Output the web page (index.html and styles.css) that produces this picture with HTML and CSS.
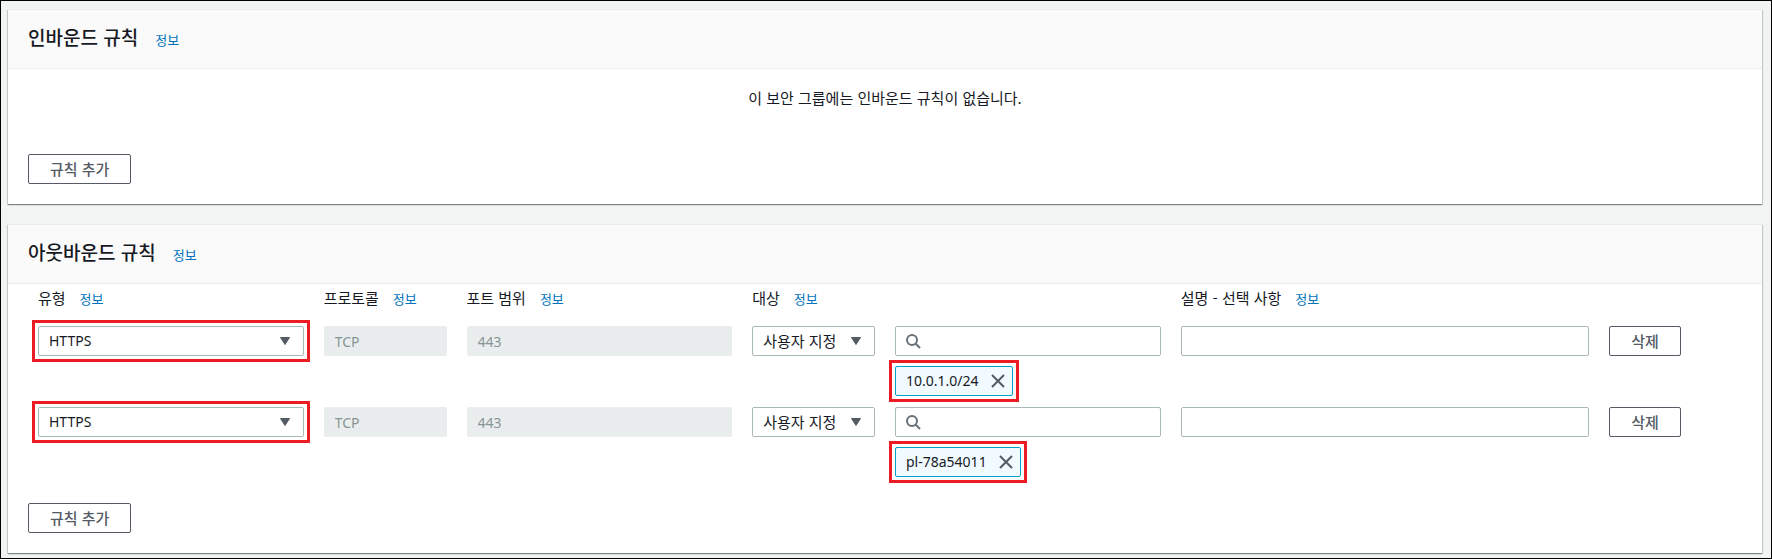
FILE: index.html
```html
<!DOCTYPE html>
<html lang="ko">
<head>
<meta charset="utf-8">
<meta name="viewport" content="width=device-width, initial-scale=1">
<title>보안 그룹 규칙</title>
<link rel="stylesheet" href="styles.css">
</head>
<body>
<svg class="sprite" aria-hidden="true">
  <symbol id="caret" viewBox="0 0 10 8"><path d="M0.5 0.5h9L5 7.5z" fill="#545b64" stroke="#545b64" stroke-linejoin="round"/></symbol>
  <symbol id="search" viewBox="0 0 16 16"><circle cx="7" cy="7" r="5" fill="none" stroke="#687078" stroke-width="2"/><path d="M10.5 10.5L15 15" stroke="#687078" stroke-width="2"/></symbol>
  <symbol id="close" viewBox="0 0 14 14"><path d="M1 1l12 12M13 1L1 13" fill="none" stroke="#545b64" stroke-width="2"/></symbol>
</svg>
<main class="page">
  <section class="panel">
    <header class="panel-header">
      <h2 class="panel-title">인바운드 규칙</h2>
      <a class="info" href="#">정보</a>
    </header>
    <div class="panel-body">
      <p class="empty">이 보안 그룹에는 인바운드 규칙이 없습니다.</p>
      <button class="button" type="button">규칙 추가</button>
    </div>
  </section>

  <section class="panel">
    <header class="panel-header">
      <h2 class="panel-title">아웃바운드 규칙</h2>
      <a class="info" href="#">정보</a>
    </header>
    <form class="panel-body panel-body-rules">
      <div class="rules">
        <div class="grid labels">
          <div class="label span-2"><span id="type">유형</span><a class="info" href="#">정보</a></div>
          <div class="label"><span id="protocol">프로토콜</span><a class="info" href="#">정보</a></div>
          <div class="label span-2"><span id="port">포트 범위</span><a class="info" href="#">정보</a></div>
          <div class="label span-3"><span id="target">대상</span><a class="info" href="#">정보</a></div>
          <div class="label span-3"><span id="description">설명 - 선택 사항</span><a class="info" href="#">정보</a></div>
        </div>
        <div class="grid">
          <div class="select span-2 highlight">
            <select class="field latin" aria-labelledby="type"><option>HTTPS</option></select>
            <svg class="caret" aria-hidden="true"><use href="#caret"/></svg>
          </div>
          <input class="field latin" type="text" value="TCP" aria-labelledby="protocol" disabled>
          <input class="field latin span-2" type="text" value="443" aria-labelledby="port" disabled>
          <div class="select">
            <select class="field" aria-labelledby="target"><option>사용자 지정</option></select>
            <svg class="caret" aria-hidden="true"><use href="#caret"/></svg>
          </div>
          <div class="destination span-2">
            <div class="search">
              <svg class="search-icon" aria-hidden="true"><use href="#search"/></svg>
              <input class="field search-input" type="search" aria-labelledby="target">
            </div>
            <div class="token latin highlight">
              <span>10.0.1.0/24</span>
              <button class="token-close" type="button" aria-label="10.0.1.0/24 제거"><svg class="close-icon" aria-hidden="true"><use href="#close"/></svg></button>
            </div>
          </div>
          <input class="field span-3" type="text" aria-labelledby="description">
          <button class="button" type="button">삭제</button>
        </div>
        <div class="grid">
          <div class="select span-2 highlight">
            <select class="field latin" aria-labelledby="type"><option>HTTPS</option></select>
            <svg class="caret" aria-hidden="true"><use href="#caret"/></svg>
          </div>
          <input class="field latin" type="text" value="TCP" aria-labelledby="protocol" disabled>
          <input class="field latin span-2" type="text" value="443" aria-labelledby="port" disabled>
          <div class="select">
            <select class="field" aria-labelledby="target"><option>사용자 지정</option></select>
            <svg class="caret" aria-hidden="true"><use href="#caret"/></svg>
          </div>
          <div class="destination span-2">
            <div class="search">
              <svg class="search-icon" aria-hidden="true"><use href="#search"/></svg>
              <input class="field search-input" type="search" aria-labelledby="target">
            </div>
            <div class="token latin highlight">
              <span>pl-78a54011</span>
              <button class="token-close" type="button" aria-label="pl-78a54011 제거"><svg class="close-icon" aria-hidden="true"><use href="#close"/></svg></button>
            </div>
          </div>
          <input class="field span-3" type="text" aria-labelledby="description">
          <button class="button" type="button">삭제</button>
        </div>
      </div>
      <button class="button" type="button">규칙 추가</button>
    </form>
  </section>
</main>
</body>
</html>
```

FILE: styles.css
```css
* {
  box-sizing: border-box;
}

body {
  margin: 0;
  background: #f2f3f3;
  color: #16191f;
  font: 15px/22px "Noto Sans CJK KR", sans-serif;
}

.sprite {
  display: none;
}

.page {
  display: flex;
  flex-direction: column;
  gap: 20px;
  min-height: 100vh;
  padding: 8px 9px 4px 7px;
  border: 1px solid #000;
}

.panel {
  background: #fff;
  border-top: 1px solid #eaeded;
  box-shadow: 0 1px 1px 0 rgba(0, 28, 36, 0.3), 1px 1px 1px 0 rgba(0, 28, 36, 0.15), -1px 1px 1px 0 rgba(0, 28, 36, 0.15);
}

.panel-header {
  display: flex;
  align-items: baseline;
  gap: 17px;
  padding: 13px 20px 17px;
  background: #fafafa;
  border-bottom: 1px solid #eaeded;
}

.panel-title {
  margin: 0;
  font-size: 19px;
  font-weight: 500;
  line-height: 28px;
}

.info {
  color: #0073bb;
  font-size: 13px;
  text-decoration: none;
}

.panel-body {
  display: flex;
  flex-direction: column;
  align-items: flex-start;
  gap: 45px;
  padding: 18px 20px 20px;
}

.panel-body-rules {
  align-items: stretch;
  gap: 26px;
  padding-top: 3px;
}

.panel-body-rules > .button {
  align-self: flex-start;
}

.empty {
  align-self: stretch;
  margin: 0;
  text-align: center;
}

.rules {
  display: flex;
  flex-direction: column;
  gap: 11px;
}

.grid {
  display: grid;
  grid-template-columns: repeat(12, minmax(0, 1fr));
  align-items: start;
  justify-items: start;
  column-gap: 20px;
  padding: 0 10px;
}

.labels {
  margin-bottom: 5px;
}

.span-2 {
  grid-column: span 2;
}

.span-3 {
  grid-column: span 3;
}

.label {
  display: flex;
  align-items: baseline;
  gap: 14px;
  white-space: nowrap;
}

.field {
  display: block;
  width: 100%;
  height: 30px;
  padding: 0 10px;
  border: 1px solid #aab7b8;
  border-radius: 2px;
  background: #fff;
  color: #16191f;
  font: inherit;
  line-height: 22px;
  appearance: none;
}

.field:disabled {
  border-color: #eaeded;
  background: #eaeded;
  color: #879596;
}

.latin,
.field.latin {
  font-family: "Noto Sans", sans-serif;
  font-size: 14px;
}

.select,
.search {
  position: relative;
  width: 100%;
}

.caret {
  position: absolute;
  top: 11px;
  right: 14px;
  width: 10px;
  height: 8px;
  pointer-events: none;
}

.destination {
  display: flex;
  flex-direction: column;
  align-items: flex-start;
  gap: 10px;
  width: 100%;
}

.search-icon {
  position: absolute;
  top: 7px;
  left: 10px;
  width: 16px;
  height: 16px;
}

.search-input {
  padding-left: 34px;
}

.token {
  position: relative;
  display: flex;
  align-items: center;
  gap: 12px;
  height: 30px;
  padding: 0 7px 0 10px;
  border: 1px solid #00a1c9;
  border-radius: 2px;
  background: #f1faff;
}

.token-close {
  display: flex;
  padding: 0;
  border: 0;
  background: none;
}

.close-icon {
  width: 14px;
  height: 14px;
}

.highlight::after {
  content: "";
  position: absolute;
  inset: -6px;
  border: 3px solid #ed1c24;
  pointer-events: none;
}

.token.highlight::after {
  inset: -7px;
}

.button {
  height: 30px;
  padding: 0 21px;
  border: 1px solid #545b64;
  border-radius: 2px;
  background: #fff;
  color: #545b64;
  font: inherit;
  font-weight: 500;
  line-height: 22px;
  white-space: nowrap;
}
```
